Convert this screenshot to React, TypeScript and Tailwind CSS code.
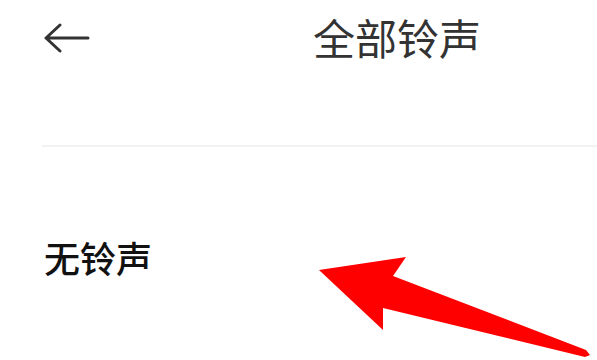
export default function App() {
  return (
    <div
      className="relative w-[597px] h-[360px] overflow-hidden bg-white"
      style={{ fontFamily: '"Noto Sans CJK SC", "Noto Sans", sans-serif' }}
    >
      {/* header */}
      <div className="flex items-center h-[76px] pl-[44px]">
        <svg width="46" height="30" viewBox="0 0 46 30" className="shrink-0">
          <path
            d="M44 15H2M16 2L2 15l14 13"
            fill="none"
            stroke="#333"
            strokeWidth="3"
            strokeLinecap="round"
            strokeLinejoin="round"
          />
        </svg>
        <h1 className="ml-[223px] -mt-[2px] text-[42px] leading-none text-[#333]">全部铃声</h1>
      </div>

      <div className="ml-[42px] mt-[69px] h-[2px] bg-[#f2f2f2]" />

      <div className="pl-[44px] pt-[92px]">
        <span className="block text-[36px] leading-none font-medium text-[#111]">无铃声</span>
      </div>

      {/* red annotation arrow */}
      <svg
        className="absolute left-0 top-0 pointer-events-none"
        width="597"
        height="360"
        viewBox="0 0 597 360"
      >
        <polygon
          points="319,270 406,257 393,276 586,350 590,355 585,357 383,308 383,330"
          fill="#ff0000"
        />
      </svg>
    </div>
  );
}
